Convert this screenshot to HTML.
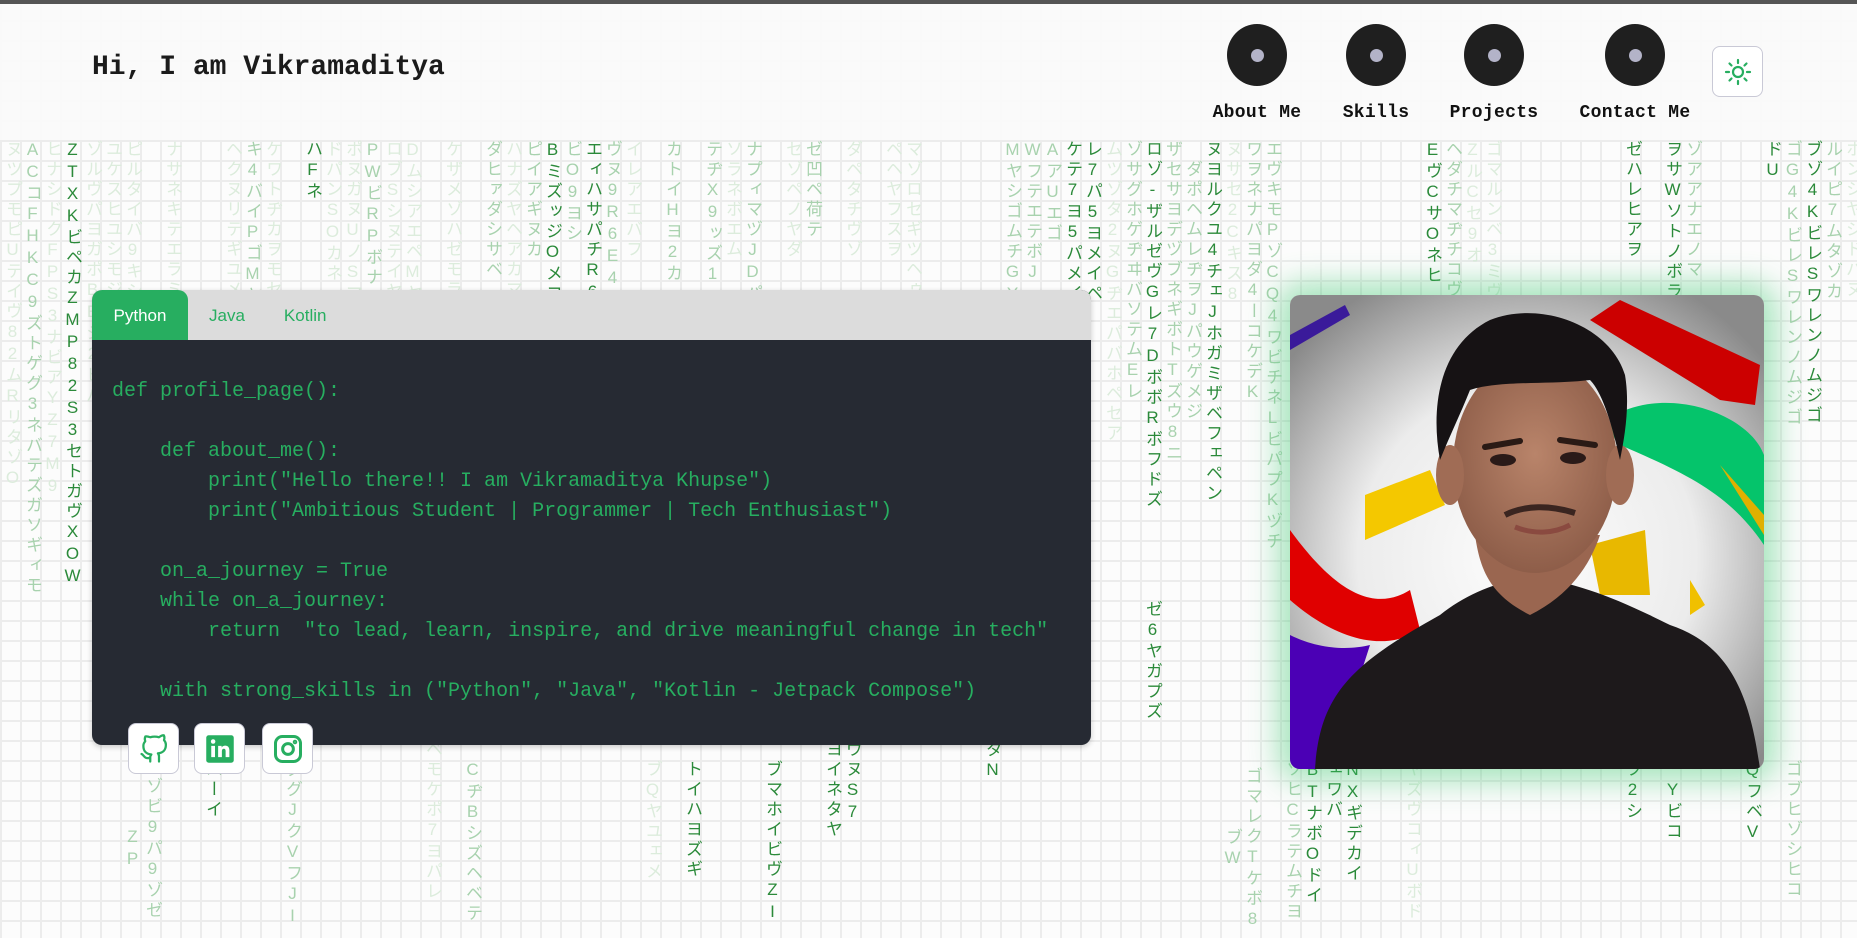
<!DOCTYPE html>
<html><head><meta charset="utf-8">
<style>
*{margin:0;padding:0;box-sizing:border-box}
html,body{width:1857px;height:938px;overflow:hidden}
body{background:#fafafa;position:relative;font-family:"Liberation Sans",sans-serif;
background-image:linear-gradient(#ececec 2px,transparent 2px),linear-gradient(90deg,#ececec 2px,transparent 2px);
background-size:20px 20px;background-color:#fcfcfc}
.topbar{position:absolute;left:0;top:0;width:1857px;height:4px;background:#555}
.rain{position:absolute;top:0;left:0;width:1857px;height:938px}
.col{position:absolute;writing-mode:vertical-rl;text-orientation:upright;font-family:"Liberation Sans","Noto Sans CJK JP",sans-serif;font-size:17px;letter-spacing:3px;line-height:20px;width:20px;text-align:center}
.f{color:#dcecdc}.m{color:#a8d2ae}.d{color:#2b8a3a}
.header{position:absolute;left:0;top:4px;width:1857px;height:136px;background:rgba(250,250,250,.93)}
.title{position:absolute;left:92px;top:52px;font-family:"Liberation Mono",monospace;font-weight:bold;font-size:28px;color:#1b1b1b}
.nav{position:absolute;top:24px;width:120px;text-align:center}
.circ{width:60px;height:62px;border-radius:50%;background:#1f1f1f;margin:0 auto;position:relative}
.circ:after{content:"";position:absolute;left:24px;top:25px;width:13px;height:13px;border-radius:50%;background:#b3b3c8}
.nav span{display:block;margin-top:17px;font-family:"Liberation Mono",monospace;font-weight:bold;font-size:18px;color:#111;letter-spacing:.3px}
.theme{position:absolute;left:1712px;top:46px;width:51px;height:51px;border:1px solid #c9c9d6;border-radius:8px;background:#fff;display:flex;align-items:center;justify-content:center}
.card{position:absolute;left:92px;top:290px;width:999px;height:455px;border-radius:10px;overflow:hidden;background:#262a33;box-shadow:0 2px 6px rgba(0,0,0,.2)}
.tabs{height:50px;background:#dcdcdc;display:flex}
.tab{height:50px;line-height:52px;font-size:17px;color:#27ae60;padding:0 20px}
.tab.on{background:#27ae60;color:#fff;border-radius:10px 10px 0 0;width:96px;text-align:center;padding:0}
pre{font-family:"Liberation Mono",monospace;font-size:20px;line-height:30px;color:#27ae60;padding:37px 0 0 20px}
.soc{position:absolute;top:723px;width:51px;height:51px;border:1px solid #c9c9d6;border-radius:8px;background:#fff;display:flex;align-items:center;justify-content:center}
.photo{position:absolute;left:1290px;top:295px;width:474px;height:474px;border-radius:10px;overflow:hidden;box-shadow:0 0 30px 12px rgba(60,200,110,.45)}
</style></head><body>
<div class="rain">
<div class="col f" style="left:2px;top:140px">ヌツプモピUテイヴ82ムRリタゾO</div>
<div class="col m" style="left:22px;top:140px">ACコFHKC9ズトゲグ3ネバテズガソギィモ</div>
<div class="col f" style="left:42px;top:140px">ヒナシドクFPS3ナビアYZ7M9</div>
<div class="col d" style="left:62px;top:140px">ZTXKビペカZMP82S3セトガヴXOW</div>
<div class="col f" style="left:82px;top:140px">ゾルヴパヨガポBEシ2ヒパ</div>
<div class="col f" style="left:102px;top:140px">ユケスヒユシモジ3ワテ</div>
<div class="col f" style="left:122px;top:140px">ピルタイバ9キシケヴヤ9パ9ゾゼZP</div>
<div class="col m" style="left:142px;top:760px">ゾビ9パ9ゾゼZP</div>
<div class="col f" style="left:162px;top:140px">ナサネキテエラミゾヤ</div>
<div class="col d" style="left:202px;top:740px">ペハーイ</div>
<div class="col f" style="left:222px;top:140px">ヘクヌリテギユメハバア</div>
<div class="col m" style="left:242px;top:140px">キ4バイPゴMヤ</div>
<div class="col f" style="left:262px;top:140px">ケワトヂカヲモセアムボ</div>
<div class="col d" style="left:302px;top:140px">ハFネ</div>
<div class="col m" style="left:282px;top:760px">ダグJクVフJI</div>
<div class="col f" style="left:322px;top:140px">ドパンSOカネ</div>
<div class="col f" style="left:342px;top:140px">ポヌガヌUノSマレヌ</div>
<div class="col m" style="left:362px;top:140px">PWビRPボナ</div>
<div class="col f" style="left:382px;top:140px">ロブSシヌテイヤネ</div>
<div class="col f" style="left:402px;top:140px">DムシアエペMヤオ</div>
<div class="col f" style="left:422px;top:740px">ベモケポ7ヨパレ</div>
<div class="col f" style="left:442px;top:140px">ケザメゾハゼモラ</div>
<div class="col m" style="left:462px;top:760px">CヂBシズヘベテ</div>
<div class="col m" style="left:482px;top:140px">ダヒァダシサベ</div>
<div class="col f" style="left:502px;top:140px">ハナズヤヘアカマ</div>
<div class="col m" style="left:522px;top:140px">ピイアギヌカ</div>
<div class="col d" style="left:542px;top:140px">BミズッジOメコ</div>
<div class="col m" style="left:562px;top:140px">ビO9ヨシ</div>
<div class="col d" style="left:582px;top:140px">エィハサパチR6E4カ</div>
<div class="col m" style="left:602px;top:140px">ヴヌ9R6E4</div>
<div class="col f" style="left:622px;top:140px">イレアエバフ</div>
<div class="col f" style="left:642px;top:760px">ブQヤユェメ</div>
<div class="col m" style="left:662px;top:140px">カトイHヨ2カ</div>
<div class="col d" style="left:682px;top:760px">トイハヨズギ</div>
<div class="col m" style="left:702px;top:140px">テヂX9ッズ1</div>
<div class="col f" style="left:722px;top:140px">ソラネボエム</div>
<div class="col m" style="left:742px;top:140px">ナプィマヅJDパム</div>
<div class="col d" style="left:762px;top:760px">ブマホイビヴZI</div>
<div class="col f" style="left:782px;top:140px">セゾペノヤダ</div>
<div class="col m" style="left:802px;top:140px">ゼ凹ペ荷テ</div>
<div class="col d" style="left:822px;top:740px">ヨイネタヤ</div>
<div class="col f" style="left:842px;top:140px">ダペタチヴゾ</div>
<div class="col d" style="left:842px;top:740px">ヴヌS7</div>
<div class="col f" style="left:882px;top:140px">ペヘヤフスヲ</div>
<div class="col f" style="left:902px;top:140px">マゾロセギツヘゥ</div>
<div class="col d" style="left:982px;top:740px">ダN</div>
<div class="col m" style="left:1002px;top:140px">MヤシゴムチGYV1</div>
<div class="col m" style="left:1022px;top:140px">WフテエテボJ</div>
<div class="col m" style="left:1042px;top:140px">AアUエゴ</div>
<div class="col d" style="left:1062px;top:140px">ケテ7ヨ5パメイ</div>
<div class="col d" style="left:1082px;top:140px">レ7パ5ヨメイペ</div>
<div class="col f" style="left:1102px;top:140px">ムツゾタ2ヌGヂエパバホペセア</div>
<div class="col m" style="left:1122px;top:140px">ゾサグホゲヂヰバソテムEレ</div>
<div class="col d" style="left:1142px;top:140px">ロゾ-ザルゼヴGレ7DボボRボフドズ</div>
<div class="col m" style="left:1162px;top:140px">ザセサヨデヅブネギボトTズウ8ニ</div>
<div class="col d" style="left:1142px;top:600px">ゼ6ヤガプズ</div>
<div class="col m" style="left:1182px;top:160px">ダポヘムレヂヲJパウゲメジ</div>
<div class="col d" style="left:1202px;top:140px">ヌヨルクユ4チェJホガミザベフェペン</div>
<div class="col f" style="left:1222px;top:140px">ヌサセ2Cキス8</div>
<div class="col m" style="left:1242px;top:140px">ワヲネナパヨダ4ーコケデK</div>
<div class="col m" style="left:1262px;top:140px">エヴキモPゾCQ4ワビチネLビパプKヅチ</div>
<div class="col m" style="left:1242px;top:760px">ゴマレクTケボ8ブW</div>
<div class="col m" style="left:1282px;top:760px">ゾヒCラテムチヨ</div>
<div class="col d" style="left:1302px;top:740px">ガBTナボOドイ</div>
<div class="col d" style="left:1322px;top:740px">シェワバ</div>
<div class="col d" style="left:1342px;top:740px">ヌNXギデカイ</div>
<div class="col f" style="left:1402px;top:760px">ヤズヴコィUボド</div>
<div class="col d" style="left:1422px;top:140px">EヴCサOネヒ</div>
<div class="col m" style="left:1442px;top:140px">ヘダチマヂチコヴ</div>
<div class="col f" style="left:1462px;top:140px">ZルCセ9オ</div>
<div class="col f" style="left:1482px;top:140px">ゴマルンベ3ミヴ</div>
<div class="col d" style="left:1622px;top:140px">ゼハレヒアヲ</div>
<div class="col d" style="left:1662px;top:140px">ヲサWソトノボラ</div>
<div class="col m" style="left:1682px;top:140px">ゾアアナエノマ</div>
<div class="col d" style="left:1622px;top:740px">ヨブ2シ</div>
<div class="col d" style="left:1662px;top:780px">Yビコ</div>
<div class="col d" style="left:1762px;top:140px">ドU</div>
<div class="col m" style="left:1782px;top:140px">ゴG4KビレSワレンノムジゴ</div>
<div class="col d" style="left:1802px;top:140px">ブゾ4KビレSワレンノムジゴ</div>
<div class="col m" style="left:1822px;top:140px">ルイピ7ムタゾカ</div>
<div class="col d" style="left:1742px;top:660px">ギラアエゲQフベV</div>
<div class="col m" style="left:1782px;top:760px">ゴブヒゾシヒコ</div>
<div class="col f" style="left:1842px;top:140px">ホンシヤジドバヌ</div>
</div>
<div class="topbar"></div>
<div class="header"></div>
<div class="title">Hi, I am Vikramaditya</div>
<div class="nav" style="left:1197px"><div class="circ"></div><span>About Me</span></div>
<div class="nav" style="left:1316px"><div class="circ"></div><span>Skills</span></div>
<div class="nav" style="left:1434px"><div class="circ"></div><span>Projects</span></div>
<div class="nav" style="left:1575px"><div class="circ"></div><span>Contact Me</span></div>
<div class="theme"><svg width="28" height="28" viewBox="0 0 28 28" fill="none" stroke="#27ae60" stroke-width="2.2" stroke-linecap="round"><circle cx="14" cy="14" r="5"/><path d="M14 2v3M14 23v3M2 14h3M23 14h3M5.5 5.5l2 2M20.5 20.5l2 2M5.5 22.5l2-2M20.5 7.5l2-2"/></svg></div>
<div class="card">
<div class="tabs"><div class="tab on">Python</div><div class="tab" style="padding-left:21px">Java</div><div class="tab" style="padding-left:19px">Kotlin</div></div>
<pre>def profile_page():

    def about_me():
        print("Hello there!! I am Vikramaditya Khupse")
        print("Ambitious Student | Programmer | Tech Enthusiast")

    on_a_journey = True
    while on_a_journey:
        return  "to lead, learn, inspire, and drive meaningful change in tech"

    with strong_skills in ("Python", "Java", "Kotlin - Jetpack Compose")</pre>
</div>
<div class="soc" style="left:128px"><svg width="30" height="32" viewBox="0 0 24 24" fill="none" stroke="#27ae60" stroke-width="1.8" stroke-linecap="round" stroke-linejoin="round"><path d="M9 19c-5 1.5-5-2.5-7-3m14 6v-3.9a3.4 3.4 0 0 0-.9-2.6c3.1-.4 6.4-1.5 6.4-6.9a5.4 5.4 0 0 0-1.5-3.7 5 5 0 0 0-.1-3.8s-1.2-.4-3.9 1.5a13.4 13.4 0 0 0-7 0C6.3 1.6 5.1 2 5.1 2a5 5 0 0 0-.1 3.8A5.4 5.4 0 0 0 3.5 9.5c0 5.4 3.3 6.5 6.4 6.9a3.4 3.4 0 0 0-.9 2.6V22"/></svg></div>
<div class="soc" style="left:194px"><svg width="30" height="30" viewBox="0 0 24 24"><rect x="1" y="1" width="22" height="22" rx="2" fill="#27ae60"/><rect x="5" y="9.5" width="3" height="9" fill="#fff"/><circle cx="6.5" cy="6" r="1.8" fill="#fff"/><path d="M10.5 9.5h2.8v1.3c.6-1 1.7-1.5 2.9-1.5 2.2 0 3.3 1.4 3.3 3.9v5.3h-3v-4.8c0-1.2-.4-1.9-1.4-1.9s-1.6.7-1.6 1.9v4.8h-3z" fill="#fff"/></svg></div>
<div class="soc" style="left:262px"><svg width="30" height="30" viewBox="0 0 24 24" fill="none" stroke="#27ae60" stroke-width="2.4"><rect x="2" y="2" width="20" height="20" rx="5.5"/><circle cx="12" cy="12" r="4.3"/><circle cx="17.6" cy="6.4" r=".6" fill="#27ae60"/></svg></div>
<div class="photo"><svg width="474" height="474" viewBox="0 0 474 474">
<defs><radialGradient id="bg" cx="50%" cy="55%" r="65%"><stop offset="0" stop-color="#fdfdfd"/><stop offset=".55" stop-color="#ececec"/><stop offset="1" stop-color="#8a8a8a"/></radialGradient>
<radialGradient id="sk" cx="50%" cy="45%" r="60%"><stop offset="0" stop-color="#b9846a"/><stop offset="1" stop-color="#8a5a46"/></radialGradient></defs>
<rect width="474" height="474" fill="url(#bg)"/>
<path d="M0 40L55 10 60 20 0 55z" fill="#3a1a9a"/>
<path d="M300 25L330 5 470 70 465 110 430 105z" fill="#cc0000"/>
<path d="M325 120C380 90 460 120 474 160V250C440 200 400 180 330 150 320 140 318 128 325 120z" fill="#05c46b"/>
<path d="M430 170L474 220V240z" fill="#e0b000"/>
<path d="M75 200L140 175 155 210 75 245z" fill="#f4c800"/>
<path d="M300 250L355 235 360 300 310 300z" fill="#e8b800"/>
<path d="M400 285L415 310 400 320z" fill="#f0c000"/>
<path d="M0 235C40 290 80 320 120 295L130 335C90 360 40 340 0 305z" fill="#e00000"/>
<path d="M0 340C30 355 60 355 80 350L40 474H0z" fill="#4b00b5"/>
<path d="M25 474C30 400 60 370 150 320 175 300 200 290 240 280 290 290 320 300 380 330 440 350 460 400 470 474z" fill="#1d191b"/>
<path d="M185 240C190 275 200 300 240 320 280 300 300 270 310 240z" fill="#9a6650"/>
<ellipse cx="245" cy="170" rx="82" ry="108" fill="url(#sk)"/>
<ellipse cx="160" cy="180" rx="14" ry="30" fill="#a06c55"/>
<ellipse cx="330" cy="180" rx="14" ry="30" fill="#a06c55"/>
<path d="M150 165C140 110 150 50 200 25 250 5 320 30 335 80 340 110 335 140 330 165 320 120 310 95 300 85 260 90 210 85 180 95 170 120 160 140 150 165z" fill="#161214"/>
<path d="M195 152L230 146M270 145L305 150" stroke="#2a1a15" stroke-width="6" stroke-linecap="round"/>
<ellipse cx="213" cy="165" rx="13" ry="6" fill="#2a1a18"/><ellipse cx="283" cy="163" rx="13" ry="6" fill="#2a1a18"/>
<path d="M215 220C235 210 260 210 285 218" stroke="#3a2520" stroke-width="6" fill="none"/>
<path d="M225 232C245 240 265 238 280 230" stroke="#8a4a40" stroke-width="5" fill="none"/>
</svg></div>
</body></html>
